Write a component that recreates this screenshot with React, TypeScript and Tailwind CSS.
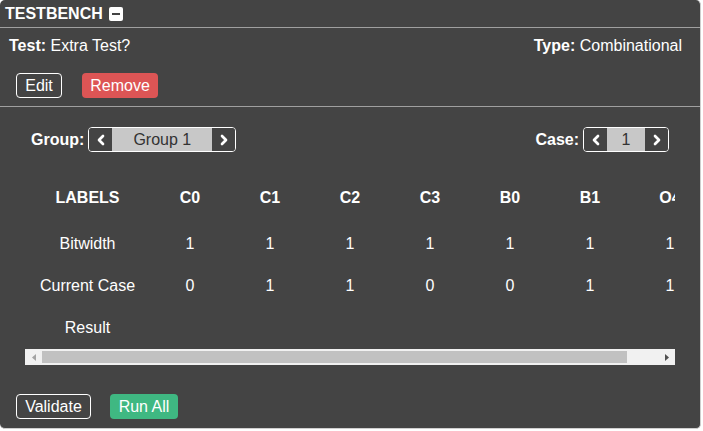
import { ChevronLeft, ChevronRight } from "lucide-react";

const COLUMNS = [
  { label: "C0", bitwidth: 1, value: "0" },
  { label: "C1", bitwidth: 1, value: "1" },
  { label: "C2", bitwidth: 1, value: "1" },
  { label: "C3", bitwidth: 1, value: "0" },
  { label: "B0", bitwidth: 1, value: "0" },
  { label: "B1", bitwidth: 1, value: "1" },
  { label: "O4", bitwidth: 1, value: "1" },
];

function Stepper({ value, middle }: { value: string; middle: string }) {
  return (
    <div className="flex h-[25px] overflow-hidden rounded-[4px] border border-white">
      <button className="flex w-[23px] items-center justify-center bg-[#444]">
        <ChevronLeft className="h-[16px] w-[16px] text-white" strokeWidth={4} />
      </button>
      <div className={`${middle} flex items-center justify-center bg-[#c8c8c8] text-[16px] text-[#333]`}>
        {value}
      </div>
      <button className="flex w-[23px] items-center justify-center bg-[#444]">
        <ChevronRight className="h-[16px] w-[16px] text-white" strokeWidth={4} />
      </button>
    </div>
  );
}

function Row({ label, cells, bold, height }: { label: string; cells: string[]; bold?: boolean; height: string }) {
  return (
    <div className={`flex ${height} items-center ${bold ? "font-bold" : ""}`}>
      <div className="w-[125px] shrink-0 text-center">{label}</div>
      {cells.map((c, i) => (
        <div key={i} className="w-[80px] shrink-0 text-center">
          {c}
        </div>
      ))}
    </div>
  );
}

export default function App() {
  return (
    <div className="h-[431px] w-[703px] bg-white font-['Liberation_Sans',Arial,sans-serif] text-[16px] text-white">
      <div className="flex h-[429px] w-[701px] flex-col rounded-[5px] border-r border-b border-[#cfcfcf] bg-[#444]">
        <div className="flex h-[28px] items-center gap-[6px] border-b border-[#a0a0a0] px-[5px]">
          <span className="font-bold">TESTBENCH</span>
          <span className="flex h-[14px] w-[14px] items-center justify-center rounded-[2px] bg-white">
            <span className="h-[2px] w-[8px] bg-[#444]" />
          </span>
        </div>

        <div className="border-b border-[#a0a0a0] pb-[8px]">
          <div className="mt-[9px] flex h-[18px] items-center justify-between pl-[9px] pr-[18px]">
            <div>
              <span className="font-bold">Test:</span> Extra Test?
            </div>
            <div>
              <span className="font-bold">Type:</span> Combinational
            </div>
          </div>
          <div className="mt-[18px] flex gap-[20px] pl-[16px]">
            <button className="h-[25px] w-[46px] rounded-[4px] border border-white">Edit</button>
            <button className="h-[25px] w-[76px] rounded-[4px] bg-[#dd5555]">Remove</button>
          </div>
        </div>

        <div className="mt-[20px] flex items-center justify-between pl-[31px] pr-[31px]">
          <div className="flex items-center gap-[4px]">
            <span className="font-bold">Group:</span>
            <Stepper value="Group 1" middle="w-[100px]" />
          </div>
          <div className="flex items-center gap-[4px]">
            <span className="font-bold">Case:</span>
            <Stepper value="1" middle="w-[38px]" />
          </div>
        </div>

        <div className="mx-[25px] mt-[22px] overflow-hidden">
          <div className="w-max">
            <Row label="LABELS" cells={COLUMNS.map((c) => c.label)} bold height="h-[49px] pb-[2px]" />
            <Row label="Bitwidth" cells={COLUMNS.map((c) => String(c.bitwidth))} height="h-[42px]" />
            <Row label="Current Case" cells={COLUMNS.map((c) => c.value)} height="h-[42px]" />
            <Row label="Result" cells={COLUMNS.map(() => "")} height="h-[42px]" />
          </div>
          <div className="flex h-[16px] items-center bg-[#f1f1f1]">
            <div className="flex w-[17px] justify-center">
              <svg width="4" height="7" viewBox="0 0 4 7">
                <path d="M4 0 L0 3.5 L4 7 Z" fill="#a3a3a3" />
              </svg>
            </div>
            <div className="h-[12px] w-[585px] bg-[#c1c1c1]" />
            <div className="flex-1" />
            <div className="flex w-[17px] justify-center">
              <svg width="4" height="7" viewBox="0 0 4 7">
                <path d="M0 0 L4 3.5 L0 7 Z" fill="#505050" />
              </svg>
            </div>
          </div>
        </div>

        <div className="mt-[29px] flex gap-[19px] pl-[16px]">
          <button className="h-[25px] w-[75px] rounded-[4px] border border-white">Validate</button>
          <button className="h-[25px] w-[68px] rounded-[4px] bg-[#3fb882]">Run All</button>
        </div>
      </div>
    </div>
  );
}
